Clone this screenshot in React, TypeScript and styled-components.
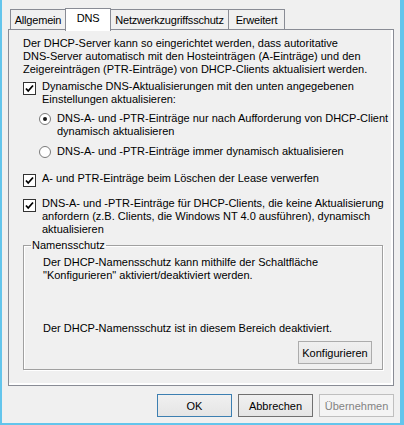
import styled, { createGlobalStyle } from "styled-components";

const GlobalStyle = createGlobalStyle`
  body {
    margin: 0;
    background: #f0f0f0;
    font-family: "Liberation Sans", Arial, sans-serif;
    font-size: 11px;
    color: #000;
  }
`;

const Window = styled.div`
  width: 404px;
  height: 425px;
  box-sizing: border-box;
  border: solid #63c5ec;
  border-width: 0 4px 2px 2px;
  background: #f0f0f0;
  display: flex;
  flex-direction: column;
  padding: 8px 6px 0 6px;
`;

const TabRow = styled.div`
  display: flex;
  align-items: flex-end;
  height: 21px;
  padding-left: 2px;
  position: relative;
  z-index: 1;
`;

const Tab = styled.div<{ $active?: boolean; $w: number }>`
  box-sizing: border-box;
  width: ${(p) => p.$w}px;
  height: ${(p) => (p.$active ? 23 : 20)}px;
  margin-bottom: ${(p) => (p.$active ? -2 : 0)}px;
  margin-right: -1px;
  border: 1px solid #898c95;
  border-bottom: none;
  background: ${(p) => (p.$active ? "#fff" : "#f0f0f0")};
  display: flex;
  justify-content: center;
  padding-top: ${(p) => (p.$active ? 3 : 4)}px;
  line-height: 13px;
  white-space: nowrap;
  letter-spacing: -0.2px;
  position: relative;
  z-index: ${(p) => (p.$active ? 2 : 1)};
`;

const Panel = styled.div`
  box-sizing: border-box;
  height: 357px;
  border: 1px solid #898c95;
  box-shadow: inset -2px -2px 0 #fff;
  background: #f0f0f0;
  padding: 7px 0 0 14px;
  display: flex;
  flex-direction: column;
  align-items: flex-start;
`;

const Text = styled.div<{ $mt?: number }>`
  line-height: 13px;
  white-space: nowrap;
  margin-top: ${(p) => p.$mt ?? 0}px;
`;

const OptionRow = styled.div<{ $mt?: number; $indent?: number }>`
  display: flex;
  align-items: flex-start;
  margin-top: ${(p) => p.$mt ?? 0}px;
  margin-left: ${(p) => p.$indent ?? 0}px;
  line-height: 13px;
  white-space: nowrap;
`;

const Box = styled.span`
  box-sizing: border-box;
  width: 13px;
  height: 13px;
  margin-top: 2px;
  margin-right: 6px;
  border: 1px solid #333;
  background: #fff;
  display: flex;
  align-items: center;
  justify-content: center;
  flex: none;
`;

const Round = styled.span<{ $on?: boolean }>`
  box-sizing: border-box;
  width: 12px;
  height: 12px;
  margin-top: 1px;
  margin-right: 6px;
  border: 1px solid #7a7a7a;
  border-radius: 50%;
  background: #fff;
  display: flex;
  align-items: center;
  justify-content: center;
  flex: none;
  &::after {
    content: "";
    width: 4px;
    height: 4px;
    border-radius: 50%;
    background: ${(p) => (p.$on ? "#1a1a1a" : "transparent")};
  }
`;

const Group = styled.fieldset`
  box-sizing: border-box;
  width: 360px;
  margin: 3px 0 0 0;
  padding: 4px 10px 5px 19px;
  border: 1px solid #a0a0a0;
  box-shadow: inset 1px 1px 0 #fff, 1px 1px 0 #fff;
  display: flex;
  flex-direction: column;
`;

const Legend = styled.legend`
  padding: 0 1px;
  margin-left: -12px;
  line-height: 13px;
`;

const Button = styled.button<{ $kind?: "default" | "focus" | "disabled" }>`
  box-sizing: border-box;
  width: ${(p) => (p.$kind ? 75 : 74)}px;
  height: 23px;
  padding: 0;
  font-family: inherit;
  font-size: 11px;
  color: ${(p) => (p.$kind === "disabled" ? "#838383" : "#000")};
  background: ${(p) =>
    p.$kind === "disabled" ? "#f4f4f4" : "linear-gradient(#f0f0f0, #e5e5e5)"};
  border: 1px solid
    ${(p) =>
      p.$kind === "default"
        ? "#3c7fb1"
        : p.$kind === "focus"
        ? "#707070"
        : p.$kind === "disabled"
        ? "#bfbfbf"
        : "#acacac"};
`;

const GroupButton = styled(Button)`
  align-self: flex-end;
  margin-top: 6px;
`;

const ButtonRow = styled.div`
  display: flex;
  justify-content: flex-end;
  gap: 6px;
  margin-top: 8px;
`;

const Check = () => (
  <Box>
    <svg width="9" height="9" viewBox="0 0 9 9">
      <polyline points="1,4.5 3.2,7 8,1.5" fill="none" stroke="#000" strokeWidth="1.8" />
    </svg>
  </Box>
);

export default function App() {
  return (
    <>
      <GlobalStyle />
      <Window>
        <TabRow>
          <Tab $w={56}>Allgemein</Tab>
          <Tab $w={46} $active>DNS</Tab>
          <Tab $w={119}>Netzwerkzugriffsschutz</Tab>
          <Tab $w={57}>Erweitert</Tab>
        </TabRow>
        <Panel>
          <Text>
            Der DHCP-Server kann so eingerichtet werden, dass autoritative
            <br />
            DNS-Server automatisch mit den Hosteinträgen (A-Einträge) und den
            <br />
            Zeigereinträgen (PTR-Einträge) von DHCP-Clients aktualisiert werden.
          </Text>
          <OptionRow $mt={4}>
            <Check />
            <span>
              Dynamische DNS-Aktualisierungen mit den unten angegebenen
              <br />
              Einstellungen aktualisieren:
            </span>
          </OptionRow>
          <OptionRow $mt={6} $indent={16}>
            <Round $on />
            <span>
              DNS-A- und -PTR-Einträge nur nach Aufforderung von DHCP-Client
              <br />
              dynamisch aktualisieren
            </span>
          </OptionRow>
          <OptionRow $mt={7} $indent={16}>
            <Round />
            <span>DNS-A- und -PTR-Einträge immer dynamisch aktualisieren</span>
          </OptionRow>
          <OptionRow $mt={14}>
            <Check />
            <span>A- und PTR-Einträge beim Löschen der Lease verwerfen</span>
          </OptionRow>
          <OptionRow $mt={10}>
            <Check />
            <span>
              DNS-A- und -PTR-Einträge für DHCP-Clients, die keine Aktualisierung
              <br />
              anfordern (z.B. Clients, die Windows NT 4.0 ausführen), dynamisch
              <br />
              aktualisieren
            </span>
          </OptionRow>
          <Group>
            <Legend>Namensschutz</Legend>
            <Text>
              Der DHCP-Namensschutz kann mithilfe der Schaltfläche
              <br />
              "Konfigurieren" aktiviert/deaktiviert werden.
            </Text>
            <Text $mt={40}>Der DHCP-Namensschutz ist in diesem Bereich deaktiviert.</Text>
            <GroupButton>Konfigurieren</GroupButton>
          </Group>
        </Panel>
        <ButtonRow>
          <Button $kind="default">OK</Button>
          <Button $kind="focus">Abbrechen</Button>
          <Button $kind="disabled">Übernehmen</Button>
        </ButtonRow>
      </Window>
    </>
  );
}
